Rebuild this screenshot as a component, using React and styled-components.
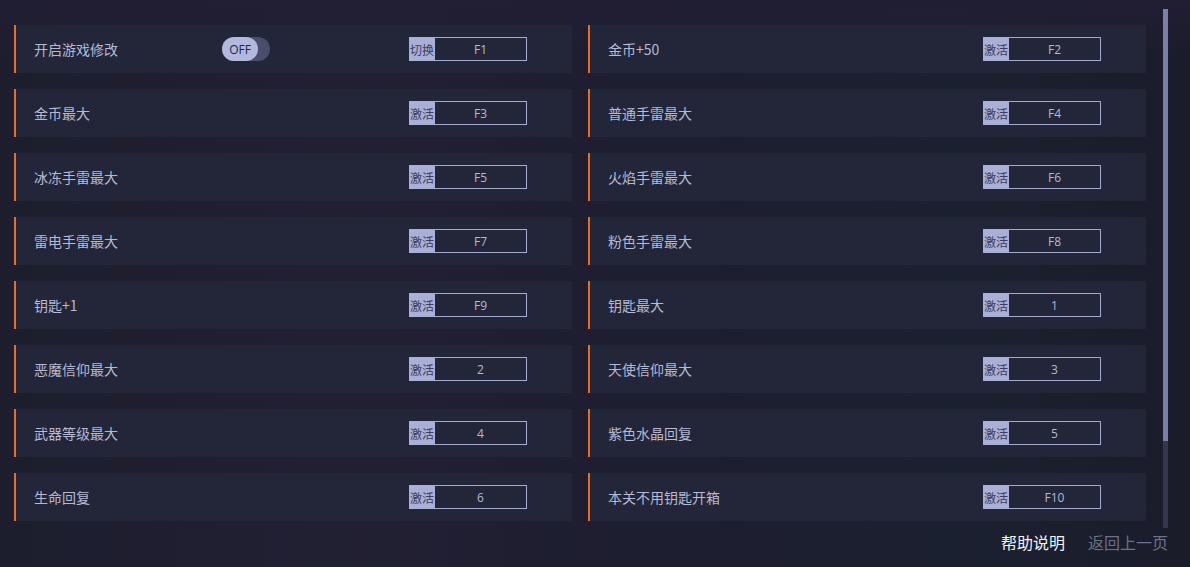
import React from 'react'
import styled, { createGlobalStyle } from 'styled-components';

const GlobalStyle = createGlobalStyle`
    html, body {
        margin: 0;
        padding: 0;
        background: #1a1c2a;
    }
    body {
        font-family: "Noto Sans CJK SC", "Noto Sans", sans-serif;
    }
`;

const Page = styled.div`
    width: 1190px;
    height: 567px;
    overflow: hidden;
    display: flex;
    flex-direction: column;
    background:
        linear-gradient(180deg, rgba(34, 30, 52, 0.9) 0px, rgba(26, 28, 42, 0) 60px),
        linear-gradient(90deg, #1c1e2e 0%, #221f33 30%, #1d1e30 55%, #1b2030 80%, #1a1c2a 100%);
`;

const Main = styled.div`
    display: flex;
    align-items: flex-start;
    padding-left: 14px;
`;

const Grid = styled.div`
    display: grid;
    grid-template-columns: repeat(2, 558px);
    grid-auto-rows: 48px;
    column-gap: 16px;
    row-gap: 16px;
    margin-top: 25px;
`;

const Card = styled.div`
    height: 48px;
    display: flex;
    align-items: center;
    background: #232538;
    border-left: 2px solid #ef6a22;
    padding-left: 18px;
    box-sizing: border-box;
`;

const Label = styled.span`
    font-size: 14px;
    color: #b6bad6;
    width: 188px;
`;

const Toggle = styled.div`
    width: 48px;
    height: 24px;
    border-radius: 12px;
    background: #4a4e6c;
    display: flex;
`;

const Knob = styled.div`
    width: 36px;
    height: 24px;
    border-radius: 12px;
    background: #b3b8de;
    color: #262838;
    font-family: "Open Sans", "Liberation Sans", sans-serif;
    font-size: 12px;
    display: flex;
    align-items: center;
    justify-content: center;
`;

const Hotkey = styled.div`
    margin-left: auto;
    margin-right: 45px;
    width: 118px;
    height: 24px;
    box-sizing: border-box;
    border: 1px solid #a4aad0;
    display: flex;
`;

const HotkeyTag = styled.span`
    width: 26px;
    background: #a9afd6;
    color: #3b3e5a;
    font-size: 12px;
    display: flex;
    align-items: center;
    justify-content: center;
    margin: -1px 0 -1px -1px;
`;

const HotkeyKey = styled.span`
    flex: 1;
    color: #b6bad6;
    font-family: "Open Sans", "Noto Sans", sans-serif;
    font-size: 12px;
    display: flex;
    align-items: center;
    justify-content: center;
`;

const Scrollbar = styled.div`
    margin-left: 17px;
    margin-top: 9px;
    width: 5px;
    height: 519px;
    background: #34374f;
    display: flex;
    flex-direction: column;
`;

const Thumb = styled.div`
    height: 432px;
    background: #7b80a8;
`;

const Footer = styled.div`
    display: flex;
    justify-content: flex-end;
    gap: 23px;
    padding-right: 22px;
    margin-top: 2px;
`;

const FooterLink = styled.span`
    font-size: 16px;
    color: ${props => props.active ? '#f2f3f8' : '#6c7088'};
    cursor: pointer;
`;

const items = [
    { name: '开启游戏修改', tag: '切换', key: 'F1', toggle: true },
    { name: '金币+50', tag: '激活', key: 'F2' },
    { name: '金币最大', tag: '激活', key: 'F3' },
    { name: '普通手雷最大', tag: '激活', key: 'F4' },
    { name: '冰冻手雷最大', tag: '激活', key: 'F5' },
    { name: '火焰手雷最大', tag: '激活', key: 'F6' },
    { name: '雷电手雷最大', tag: '激活', key: 'F7' },
    { name: '粉色手雷最大', tag: '激活', key: 'F8' },
    { name: '钥匙+1', tag: '激活', key: 'F9' },
    { name: '钥匙最大', tag: '激活', key: '1' },
    { name: '恶魔信仰最大', tag: '激活', key: '2' },
    { name: '天使信仰最大', tag: '激活', key: '3' },
    { name: '武器等级最大', tag: '激活', key: '4' },
    { name: '紫色水晶回复', tag: '激活', key: '5' },
    { name: '生命回复', tag: '激活', key: '6' },
    { name: '本关不用钥匙开箱', tag: '激活', key: 'F10' },
];

function App() {
    return (
        <Page>
            <GlobalStyle />
            <Main>
                <Grid>
                    {items.map(item => (
                        <Card key={item.name}>
                            <Label>{item.name}</Label>
                            {item.toggle && (
                                <Toggle>
                                    <Knob>OFF</Knob>
                                </Toggle>
                            )}
                            <Hotkey>
                                <HotkeyTag>{item.tag}</HotkeyTag>
                                <HotkeyKey>{item.key}</HotkeyKey>
                            </Hotkey>
                        </Card>
                    ))}
                </Grid>
                <Scrollbar>
                    <Thumb />
                </Scrollbar>
            </Main>
            <Footer>
                <FooterLink active>帮助说明</FooterLink>
                <FooterLink>返回上一页</FooterLink>
            </Footer>
        </Page>
    )
}

export default App
